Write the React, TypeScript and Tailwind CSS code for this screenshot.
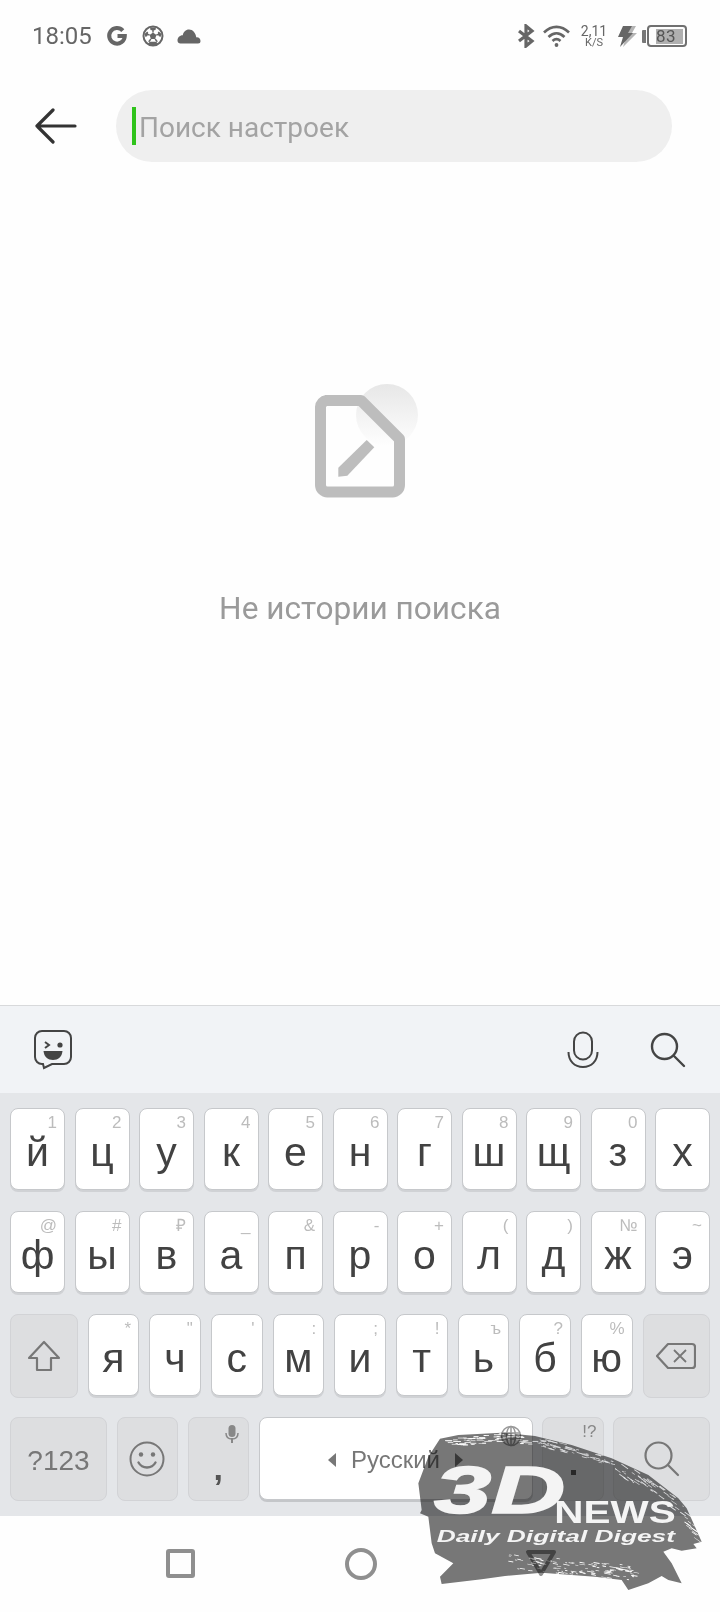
const ROW1 = [['й', '1'], ['ц', '2'], ['у', '3'], ['к', '4'], ['е', '5'], ['н', '6'], ['г', '7'], ['ш', '8'], ['щ', '9'], ['з', '0'], ['х', '']];
const ROW2 = [['ф', '@'], ['ы', '#'], ['в', '₽'], ['а', '_'], ['п', '&'], ['р', '-'], ['о', '+'], ['л', '('], ['д', ')'], ['ж', '№'], ['э', '~']];
const ROW3 = [['я', '*'], ['ч', '"'], ['с', "'"], ['м', ':'], ['и', ';'], ['т', '!'], ['ь', 'ъ'], ['б', '?'], ['ю', '%']];

const TOP_EDGE = [[75, 56], [260, 38], [360, 48], [470, 75], [590, 115], [700, 165], [790, 235], [840, 320]];

function edgeY(x: number) {
  for (let i = 1; i < TOP_EDGE.length; i++) {
    const [x0, y0] = TOP_EDGE[i - 1];
    const [x1, y1] = TOP_EDGE[i];
    if (x <= x1) return y0 + ((x - x0) / (x1 - x0)) * (y1 - y0);
  }
  return 320;
}

// deterministic speckle so the brush edge looks torn
function speckles() {
  const out: { x: number; y: number; w: number; h: number; a: number }[] = [];
  let s = 17;
  const rnd = () => {
    s = (s * 16807) % 2147483647;
    return s / 2147483647;
  };
  for (let i = 0; i < 190; i++) {
    const x = 90 + rnd() * 750;
    const y = edgeY(x) + rnd() * (x > 600 ? 42 : 26);
    const a = x > 600 ? 35 : x > 360 ? 15 : 0;
    out.push({ x, y, w: 5 + rnd() * 20, h: 1.5 + rnd() * 1.5, a });
  }
  for (let i = 0; i < 110; i++) {
    const x = 280 + rnd() * 380;
    const y = 400 + ((x - 280) / 380) * 35 + rnd() * 45;
    out.push({ x, y, w: 4 + rnd() * 16, h: 1.5 + rnd() * 1.5, a: 10 });
  }
  return out;
}

function Key({ letter, hint }: { letter: string; hint: string }) {
  return (
    <div className="relative flex-1 h-[82px] bg-white border border-[#c6c8cb] rounded-[8px] shadow-[0_2px_0_#d0d2d5] flex justify-center pt-[20px]">
      <span className="text-[41px] leading-[46px] text-[#424242] font-['Liberation_Sans',sans-serif]">{letter}</span>
      <span className="absolute top-[3px] right-[7px] text-[17px] leading-[22px] text-[#bcbcbc] font-['Liberation_Sans',sans-serif]">{hint}</span>
    </div>
  );
}

function StatusBar() {
  return (
    <div className="h-[72px] flex items-center pl-[32px] pr-[33px] text-[#666]">
      <span className="text-[24px] leading-none font-['Roboto',sans-serif] w-[74px]">18:05</span>
      <svg width="22" height="22" viewBox="0 0 22 22" fill="none" stroke="#666" strokeWidth="4">
        <path d="M16.8 5.6A7.8 7.8 0 1 0 18.8 11H11.5" />
      </svg>
      <svg className="ml-[14px]" width="22" height="22" viewBox="0 0 22 22">
        <circle cx="11" cy="11" r="9.500" fill="#fff" stroke="#666" strokeWidth="2" />
        <path d="M11 7.500V4M14.400 10l3.400-1.200M13.100 14l2.200 2.800M8.900 14l-2.200 2.800M7.600 10L4.200 8.800" stroke="#666" strokeWidth="1.400" />
        <path d="M11 7.500l3.400 2.500-1.300 4H8.900l-1.300-4zM8 2.500h6L13.500 5 11 5.500 8.500 5zM2.500 9l2.700-2.500 1 1-.8 3.600-1.900 1zM19.500 9l-2.700-2.500-1 1 .8 3.600 1.900 1zM6.500 18.500l1.200-1.800h6.600l1.200 1.800-3 1.500h-3z" fill="#666" />
      </svg>
      <svg className="ml-[13px]" width="24" height="16" viewBox="0 0 24 16" fill="#666">
        <path d="M3.500 15.500h17.500a2.500 2.500 0 0 0 2.500-2.500c0-2.400-2-4-4.200-3.600C18.700 5 15.800 1.500 12 1.500 8.700 1.500 6.300 4 5.800 7.200 3 7 .5 9.500.5 12.500c0 1.800 1.300 3 3 3z" />
      </svg>
      <div className="flex-1" />
      <svg width="18" height="24" viewBox="0 0 18 24" fill="none" stroke="#666" strokeWidth="3.200">
        <path d="M2 7l13 10-6 5V2l6 5L2 17" />
      </svg>
      <svg className="ml-[7px]" width="29" height="24" viewBox="0 0 29 24" fill="none" stroke="#666" strokeWidth="2.600">
        <path d="M2 8.500C9.500 1 19.500 1 27 8.500M6.500 13c5-5 11-5 16 0M10.500 17c2.500-2.400 5.500-2.400 8 0" />
        <circle cx="14.500" cy="21" r="1.900" fill="#666" stroke="none" />
      </svg>
      <div className="ml-[10px] w-[26px] flex flex-col items-center font-['Roboto',sans-serif] text-[#666]">
        <span className="text-[14px] leading-[13px]">2,11</span>
        <span className="text-[11px] leading-[10px]">K/S</span>
      </div>
      <svg className="ml-[10px]" width="20" height="24" viewBox="0 0 20 24">
        <path d="M9 2h10l-4 7h5L6 23l3-10H5z" fill="#b5b5b5" />
        <path d="M6 2h9l-4 7h5L3 23l3-10H1z" fill="#666" />
      </svg>
      <div className="ml-[5px] w-[4px] h-[13px] bg-[#777] rounded-l-[1px]" />
      <div className="ml-[1px] w-[40px] h-[22px] border-2 border-[#707070] rounded-[4px] relative flex items-center pl-[7px]">
        <div className="absolute left-[7px] top-[1.5px] bottom-[1.5px] w-[27px] bg-[#b0b0b0]" />
        <span className="relative text-[17px] leading-none tracking-[0.5px] text-[#555] font-['Roboto',sans-serif]">83</span>
      </div>
    </div>
  );
}

function Watermark() {
  const bits = speckles();
  return (
    <>
      <svg className="absolute left-[415px] top-[1420px] mix-blend-multiply" width="300" height="180" viewBox="0 0 900 540">
        <path
          d="M75 56L130 45L260 38L360 48L470 75L590 115L700 165L790 235L815 265L840 320L860 365L835 372L845 385L800 392L770 385L745 395L770 430L800 490L760 480L740 468L700 490L640 510L620 480L540 470L380 458L270 468L200 478L80 492L75 470L115 430L60 400L50 370L40 290L15 280L20 270L10 190L25 150L40 110Z"
          fill="#777"
        />
        {bits.map((b, i) => (
          <rect key={i} x={b.x} y={b.y} width={b.w} height={b.h} fill="#fff" transform={`rotate(${b.a} ${b.x} ${b.y})`} />
        ))}
      </svg>
      <svg className="absolute left-[415px] top-[1420px]" width="300" height="180" viewBox="0 0 900 540">
        <g fill="#f4f4f4" fontFamily="'Liberation Sans', sans-serif">
          <text x="58" y="280" fontSize="198" fontWeight="700" fontStyle="italic" stroke="#f4f4f4" strokeWidth="5" textLength="392" lengthAdjust="spacingAndGlyphs">3D</text>
          <text x="418" y="310" fontSize="94" fontWeight="700" textLength="364" lengthAdjust="spacingAndGlyphs">NEWS</text>
          <text x="65" y="365" fontSize="52" fontWeight="700" fontStyle="italic" textLength="715" lengthAdjust="spacingAndGlyphs">Daily Digital Digest</text>
        </g>
      </svg>
    </>
  );
}

export default function App() {
  return (
    <div className="relative w-[720px] h-[1612px] flex flex-col bg-[#fefefe] overflow-hidden font-['Roboto',sans-serif]">
      <StatusBar />

      <div className="h-[90px] flex items-start pt-[18px] pl-[35px]">
        <svg className="mt-[18px]" width="42" height="36" viewBox="0 0 42 36" fill="none" stroke="#333" strokeWidth="3.200" strokeLinecap="round" strokeLinejoin="round">
          <path d="M18 2L2 18l16 16M2 18h38" />
        </svg>
        <div className="ml-[39px] w-[556px] h-[72px] rounded-full bg-[#efefef] flex items-center pl-[16px]">
          <div className="w-[4px] h-[38px] bg-[#2fc31b]" />
          <span className="ml-[3px] mt-[4px] text-[28px] leading-none text-[#a3a3a3]">Поиск настроек</span>
        </div>
      </div>

      <div className="flex-1 flex flex-col items-center pt-[218px]">
        <svg width="120" height="125" viewBox="0 0 120 125" fill="none">
          <defs>
            <linearGradient id="halo" x1="0" y1="0" x2="0" y2="1">
              <stop offset="0" stopColor="#e7e7e7" />
              <stop offset="1" stopColor="#fefefe" />
            </linearGradient>
          </defs>
          <circle cx="87" cy="35" r="31" fill="url(#halo)" />
          <path d="M26 20.500H61L99.500 59V105a7 7 0 0 1-7 7H27.500a7 7 0 0 1-7-7V27a7 7 0 0 1 6-6.500z" stroke="#bdbdbd" strokeWidth="11" strokeLinejoin="round" />
          <path d="M66.700 60l7.600 7.300-27 28.400-9 1v-9z" fill="#bdbdbd" />
        </svg>
        <div className="mt-[84px] text-[31.6px] leading-[40px] text-[#9a9a9a]">Не истории поиска</div>
      </div>

      <div className="h-[88px] border-t border-[#d8d9db] bg-[#f1f3f6] flex items-center pl-[33px] pr-[34px]">
        <svg width="40" height="42" viewBox="0 0 40 42" fill="none" stroke="#444" strokeWidth="2">
          <path d="M9 2h22a7 7 0 0 1 7 7v19a7 7 0 0 1-7 7H19l-8 4-1-4H9a7 7 0 0 1-7-7V9a7 7 0 0 1 7-7z" />
          <path d="M12 13l4 3-4 3" />
          <circle cx="27" cy="16" r="2.600" fill="#444" stroke="none" />
          <path d="M10.500 22h19c-.5 6-4.500 9-9.500 9s-9-3-9.500-9z" fill="#444" stroke="none" />
        </svg>
        <div className="flex-1" />
        <svg className="mr-[51px]" width="32" height="38" viewBox="0 0 32 38" fill="none" stroke="#444" strokeWidth="2">
          <rect x="7" y="1.500" width="18" height="27" rx="9" />
          <path d="M1.500 21c0 9 6 15 14.500 15s14.500-6 14.500-15" />
        </svg>
        <svg width="36" height="36" viewBox="0 0 36 36" fill="none" stroke="#444" strokeWidth="2.400" strokeLinecap="round">
          <circle cx="14.500" cy="14.500" r="12.500" />
          <path d="M24 24l10 10" />
        </svg>
      </div>

      <div className="bg-[#e4e6e9] pt-[15px] pb-[15px] px-[10px] flex flex-col gap-[21px]">
        <div className="flex gap-[9.5px]">
          {ROW1.map(([l, h]) => <Key key={l} letter={l} hint={h} />)}
        </div>
        <div className="flex gap-[9.5px]">
          {ROW2.map(([l, h]) => <Key key={l} letter={l} hint={h} />)}
        </div>
        <div className="flex gap-[10px] h-[82px]">
          <div className="w-[67.5px] h-[84px] bg-[#dddee0] border border-[#d2d3d6] rounded-[8px] flex items-center justify-center">
            <svg width="34" height="32" viewBox="0 0 34 32" fill="none" stroke="#777" strokeWidth="2.200" strokeLinejoin="round">
              <path d="M17 2L2 18h8v12h14V18h8z" />
            </svg>
          </div>
          {ROW3.map(([l, h]) => <Key key={l} letter={l} hint={h} />)}
          <div className="w-[67.5px] h-[84px] bg-[#dddee0] border border-[#d2d3d6] rounded-[8px] flex items-center justify-center">
            <svg width="40" height="28" viewBox="0 0 40 28" fill="none" stroke="#777" strokeWidth="2.200" strokeLinejoin="round">
              <path d="M12 2h24a3 3 0 0 1 3 3v18a3 3 0 0 1-3 3H12L1 14z" />
              <path d="M18 8l12 12M30 8L18 20" strokeWidth="1.800" />
            </svg>
          </div>
        </div>
        <div className="flex gap-[9.5px] h-[84px]">
          <div className="w-[97px] pt-[3px] bg-[#dddee0] border border-[#d2d3d6] rounded-[8px] flex items-center justify-center text-[28px] text-[#777] font-['Liberation_Sans',sans-serif]">?123</div>
          <div className="w-[61.5px] bg-[#dddee0] border border-[#d2d3d6] rounded-[8px] flex items-center justify-center">
            <svg width="36" height="36" viewBox="0 0 36 36" fill="none" stroke="#777" strokeWidth="2">
              <circle cx="18" cy="18" r="16.500" />
              <circle cx="12" cy="13.500" r="2.200" fill="#777" stroke="none" />
              <circle cx="24" cy="13.500" r="2.200" fill="#777" stroke="none" />
              <path d="M9.500 21.500c2 3.500 5 5 8.500 5s6.500-1.500 8.500-5" strokeWidth="2.400" strokeLinecap="round" />
            </svg>
          </div>
          <div className="relative w-[61.5px] bg-[#dddee0] border border-[#d2d3d6] rounded-[8px] flex justify-center">
            <span className="mt-[30px] text-[34px] leading-[40px] font-bold text-[#555] font-['Liberation_Sans',sans-serif]">,</span>
            <svg className="absolute top-[7px] right-[9px]" width="14" height="18" viewBox="0 0 14 18" fill="#888">
              <rect x="3.500" y="0" width="7" height="12" rx="3.500" />
              <path d="M1 8c0 4 2.500 6 6 6s6-2 6-6" fill="none" stroke="#888" strokeWidth="1.500" />
              <rect x="6" y="13" width="2" height="5" />
            </svg>
          </div>
          <div className="relative flex-1 h-[83px] pt-[2px] bg-white border border-[#c6c8cb] rounded-[8px] shadow-[0_2px_0_#c4c6c9] flex items-center justify-center gap-[15px]">
            <span className="w-0 h-0 border-y-[7px] border-y-transparent border-r-[8px] border-r-[#777]" />
            <span className="text-[24px] leading-none text-[#777] font-['Liberation_Sans',sans-serif]">Русский</span>
            <span className="w-0 h-0 border-y-[7px] border-y-transparent border-l-[8px] border-l-[#777]" />
            <svg className="absolute top-[7px] right-[10px]" width="22" height="22" viewBox="0 0 22 22" fill="none" stroke="#999" strokeWidth="1.500">
              <circle cx="11" cy="11" r="9.500" />
              <ellipse cx="11" cy="11" rx="4.500" ry="9.500" />
              <path d="M2 8h18M2 14h18M11 1.500v19" />
            </svg>
          </div>
          <div className="relative w-[61.5px] bg-[#dddee0] border border-[#d2d3d6] rounded-[8px]">
            <span className="absolute top-[3px] right-[6px] text-[17px] leading-[22px] text-[#888] font-['Liberation_Sans',sans-serif]">!?</span>
            <span className="absolute top-[52px] left-[28px] w-[5px] h-[5px] bg-[#555]" />
          </div>
          <div className="w-[97px] bg-[#dddee0] border border-[#d2d3d6] rounded-[8px] flex items-center justify-center">
            <svg width="36" height="36" viewBox="0 0 36 36" fill="none" stroke="#777" strokeWidth="2.200" strokeLinecap="round">
              <circle cx="14.500" cy="14.500" r="13" />
              <path d="M24 24l10 10" />
            </svg>
          </div>
        </div>
      </div>

      <div className="h-[96px] relative flex items-start pt-[33px]">
        <div className="ml-[166px] w-[29px] h-[29px] border-[4px] border-[#8f8f8f] rounded-[3px]" />
        <div className="ml-[150px] -mt-[1px] w-[32px] h-[32px] border-[4px] border-[#8f8f8f] rounded-full" />
        <svg className="ml-[148px]" width="32" height="28" viewBox="0 0 32 28" fill="none" stroke="#8f8f8f" strokeWidth="4" strokeLinejoin="round">
          <path d="M3 3h26L16 25z" />
        </svg>
      </div>

      <Watermark />
    </div>
  );
}
